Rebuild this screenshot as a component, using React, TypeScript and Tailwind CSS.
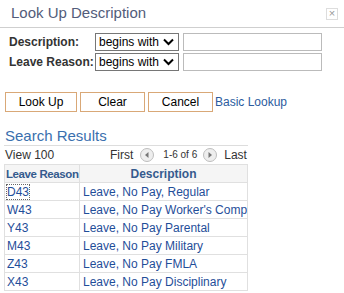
import React from "react";

const rows = [
  ["D43", "Leave, No Pay, Regular"],
  ["W43", "Leave, No Pay Worker's Comp"],
  ["Y43", "Leave, No Pay Parental"],
  ["M43", "Leave, No Pay Military"],
  ["Z43", "Leave, No Pay FMLA"],
  ["X43", "Leave, No Pay Disciplinary"],
];

function Select() {
  return (
    <div className="flex h-[18px] w-[84px] items-center justify-between whitespace-nowrap border border-[#767676] bg-white pl-[3px] pr-[4px] text-[12px] text-black">
      <span>begins with</span>
      <svg width="11" height="8" viewBox="0 0 11 8">
        <path d="M1 1.5 L5.5 6 L10 1.5" fill="none" stroke="#000" strokeWidth="2" />
      </svg>
    </div>
  );
}

function Arrow({ dir }: { dir: "l" | "r" }) {
  return (
    <svg width="14" height="14" viewBox="0 0 14 14" className="block">
      <circle cx="7" cy="7" r="6.5" fill="#eeeeee" stroke="#bdbdbd" />
      {dir === "l" ? (
        <path d="M8.5 4 L5 7 L8.5 10 Z" fill="#777" />
      ) : (
        <path d="M5.5 4 L9 7 L5.5 10 Z" fill="#777" />
      )}
    </svg>
  );
}

export default function App() {
  return (
    <div className="h-[293px] w-[344px] overflow-hidden bg-white font-['Liberation_Sans',Arial,sans-serif]">
      <div className="flex h-[28px] items-center justify-between border-b border-[#cfcfcf] pl-[11px] pr-[6px]">
        <span className="text-[15px] text-[#525c7a]">Look Up Description</span>
        <div className="flex h-[12px] w-[12px] items-center justify-center border border-[#dddddd] text-[11px] leading-none text-[#999]">
          ×
        </div>
      </div>
      <div className="mt-[5px] flex flex-col gap-[2px] pl-[9px]">
        <div className="flex items-center">
          <span className="w-[86px] whitespace-nowrap text-[12px] font-bold text-[#333]">Description:</span>
          <Select />
          <div className="ml-[4px] h-[18px] w-[139px] border border-[#bbbbbb]" />
        </div>
        <div className="flex items-center">
          <span className="w-[86px] whitespace-nowrap text-[12px] font-bold text-[#333]">Leave Reason:</span>
          <Select />
          <div className="ml-[4px] h-[18px] w-[139px] border border-[#bbbbbb]" />
        </div>
      </div>
      <div className="mt-[21px] flex items-center gap-[3px] pl-[5px] text-[12px] text-black">
        <div className="flex h-[20px] w-[72px] items-center justify-center border border-[#d9a877]">Look Up</div>
        <div className="flex h-[20px] w-[65px] items-center justify-center border border-[#d9a877]">Clear</div>
        <div className="flex h-[20px] w-[65px] items-center justify-center border border-[#d9a877]">Cancel</div>
        <span className="-ml-[1px] text-[#2b5b9e]">Basic Lookup</span>
      </div>
      <div className="mt-[15px] pl-[5px] text-[15px] leading-[18px] text-[#3a6fae]">Search Results</div>
      <div className="ml-[4px] w-[244px] text-[12px] leading-[16px]">
        <div className="flex h-[19px] items-center whitespace-nowrap border-t border-[#dddddd] pl-[1px] text-[#333]">
          <span className="w-[105px]">View 100</span>
          <span>First</span>
          <span className="ml-[7px]"><Arrow dir="l" /></span>
          <span className="ml-[9px] text-[10px]">1-6 of 6</span>
          <span className="ml-[6px]"><Arrow dir="r" /></span>
          <span className="ml-[7px]">Last</span>
        </div>
        <table className="w-[244px] table-fixed border-collapse">
          <colgroup>
            <col className="w-[75px]" />
            <col />
          </colgroup>
          <thead>
            <tr className="h-[18px] bg-[#f5f5f5]">
              <th className="overflow-hidden whitespace-nowrap border border-[#e0e0e0] p-0 pl-[1px] text-left text-[11.5px] font-bold tracking-[-0.4px] text-[#355b8e]">Leave Reason</th>
              <th className="overflow-hidden whitespace-nowrap border border-[#e0e0e0] p-0 text-center font-bold text-[#355b8e]">Description</th>
            </tr>
          </thead>
          <tbody>
            {rows.map(([c, d], i) => (
              <tr key={c} className="h-[18px]">
                <td className="overflow-hidden whitespace-nowrap border border-[#e0e0e0] p-0 pl-[2px] text-[#1f4e99]">
                  {i === 0 ? <span className="outline-1 outline-dotted outline-[#666]">{c}</span> : c}
                </td>
                <td className="overflow-hidden whitespace-nowrap border border-[#e0e0e0] p-0 pl-[3px] text-[#1f4e99]">{d}</td>
              </tr>
            ))}
          </tbody>
        </table>
      </div>
    </div>
  );
}
